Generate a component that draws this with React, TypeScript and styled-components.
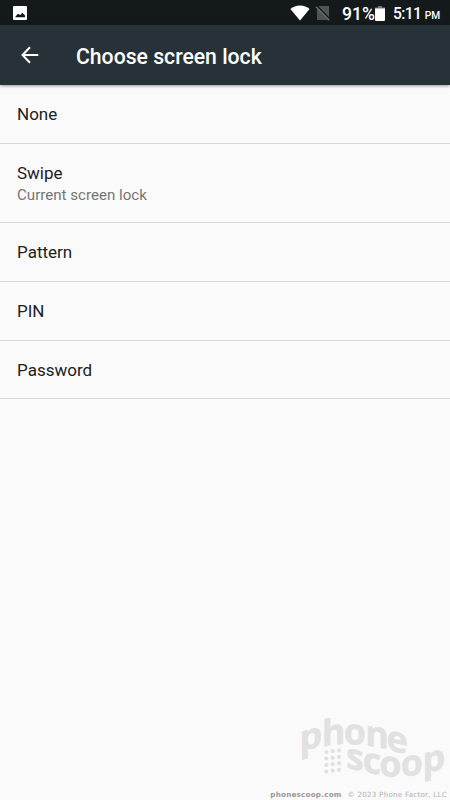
import React from "react";
import styled, { createGlobalStyle } from "styled-components";

const GlobalStyle = createGlobalStyle`
  * { box-sizing: border-box; }
  body { margin: 0; background: #fafafa; font-family: Roboto, sans-serif; }
`;

const Screen = styled.div`
  width: 450px;
  height: 800px;
  display: flex;
  flex-direction: column;
  overflow: hidden;
  background: #fafafa;
`;

const StatusBar = styled.div`
  height: 25px;
  flex: none;
  display: flex;
  align-items: center;
  justify-content: space-between;
  padding: 0 10px 0 13px;
  background: #14191c;
  color: #fff;
`;

const StatusGroup = styled.div`
  display: flex;
  align-items: center;
  height: 25px;
  svg { display: block; flex: none; }
`;

const BatteryLevel = styled.span`
  margin: 3px 0 0 11px;
  width: 33px;
  white-space: nowrap;
  font-size: 17.6px;
  font-weight: 500;
  line-height: 22px;
`;

const BatteryIcon = styled.svg`
  margin-top: 2px;
`;

const Clock = styled.span`
  margin: 5px 0 0 8px;
  width: 47px;
  white-space: nowrap;
  font-size: 15.6px;
  font-weight: 500;
  line-height: 22px;
  letter-spacing: -0.6px;
`;

const Meridiem = styled.span`
  margin-left: 3.5px;
  font-size: 10.2px;
  letter-spacing: 0;
`;

const Header = styled.header`
  height: 60px;
  flex: none;
  display: flex;
  align-items: center;
  padding-left: 20px;
  background: #273238;
  box-shadow: 0 1px 3px rgba(0, 0, 0, 0.4);
  z-index: 1;
`;

const Title = styled.h1`
  margin: 3px 0 0 36px;
  color: #fff;
  font-size: 21.2px;
  font-weight: 500;
  line-height: 28px;
`;

const OptionList = styled.div`
  flex: 1;
`;

const Option = styled.div<{ $height: number }>`
  height: ${(p) => p.$height}px;
  padding: 18px 0 0 17px;
  border-bottom: 1px solid #d9d9d9;
`;

const OptionName = styled.div`
  color: #212121;
  font-size: 17px;
  line-height: 22px;
`;

const OptionNote = styled.div`
  color: #757575;
  font-size: 15.1px;
  line-height: 21px;
  padding-top: 1px;
`;

const Brand = styled.svg`
  display: block;
  flex: none;
  align-self: flex-end;
  overflow: visible;
  font-family: "Open Sans", sans-serif;
  font-weight: 700;
  font-size: 36px;
  fill: #e1e1e1;
  text-anchor: middle;
`;

const Credit = styled.footer`
  height: 12px;
  flex: none;
  display: flex;
  justify-content: flex-end;
  padding: 1px 3px 0 0;
  gap: 6px;
  color: #b0b0b0;
  font: 7.2px/12px "DejaVu Sans", sans-serif;
  letter-spacing: 0.22px;
  white-space: nowrap;
`;

const Site = styled.span`
  color: #999;
  font-weight: 700;
`;

const options = [
  { name: "None", height: 59 },
  { name: "Swipe", note: "Current screen lock", height: 79 },
  { name: "Pattern", height: 59 },
  { name: "PIN", height: 59 },
  { name: "Password", height: 58 },
];

const letters: [string, number, number, number][] = [
  ["p", 21, 53, -14],
  ["h", 43.5, 49, -8],
  ["o", 64.8, 48.5, 2],
  ["n", 87, 51, 9],
  ["e", 107, 56, 13],
  ["s", 65, 73.5, 13],
  ["c", 82, 77.5, 9],
  ["o", 100.5, 80.5, 3],
  ["o", 121.8, 79.5, -5],
  ["p", 143.8, 75, -12],
];

export default function App() {
  return (
    <Screen>
      <GlobalStyle />
      <StatusBar>
        <StatusGroup>
          <svg width="14" height="14" viewBox="0 0 14 14">
            <path fill="#fff" fillRule="evenodd" d="M1 0h12a1 1 0 0 1 1 1v12a1 1 0 0 1-1 1H1a1 1 0 0 1-1-1V1a1 1 0 0 1 1-1ZM2 11.2h10V9.6L9.3 6.8 7.4 9 4.8 7.7Z" />
          </svg>
        </StatusGroup>
        <StatusGroup>
          <svg width="20" height="16" viewBox="0 0 20 16">
            <path fill="#fff" d="M.4 4C3 1.8 6.3.6 10 .6S17 1.8 19.6 4L10 15.5Z" />
          </svg>
          <svg width="21" height="16" viewBox="0 0 21 16">
            <path fill="#505457" d="M9 1h10v14H7V4Z" />
            <path stroke="#14191c" strokeWidth="2.4" d="M6 .5 20 14.8" />
            <path stroke="#6b6f71" strokeWidth="1.4" d="M6 1.7 19.3 15.2" />
          </svg>
          <BatteryLevel>91%</BatteryLevel>
          <BatteryIcon width="10" height="15" viewBox="0 0 10 15">
            <path fill="#777" d="M3 0h4v1.5h3V4H0V1.5h3Z" />
            <path fill="#fff" d="M0 2.5h10V14a1 1 0 0 1-1 1H1a1 1 0 0 1-1-1Z" />
          </BatteryIcon>
          <Clock>5:11<Meridiem>PM</Meridiem></Clock>
        </StatusGroup>
      </StatusBar>
      <Header>
        <svg width="20" height="20" viewBox="0 0 20 20" fill="none" stroke="#fff" strokeWidth="2">
          <path d="M18.3 10H3M10 2.3 2.5 10l7.5 7.7" />
        </svg>
        <Title>Choose screen lock</Title>
      </Header>
      <OptionList>
        {options.map((o) => (
          <Option key={o.name} $height={o.height}>
            <OptionName>{o.name}</OptionName>
            {o.note && <OptionNote>{o.note}</OptionNote>}
          </Option>
        ))}
      </OptionList>
      <Brand width="160" height="92" viewBox="0 0 160 92">
        {letters.map(([ch, x, y, tilt], i) => (
          <text key={i} stroke="#e1e1e1" strokeWidth="0.4" transform={`translate(${x} ${y}) skewY(${tilt})`}>{ch}</text>
        ))}
        {[0, 1, 2, 3].map((row) =>
          [0, 1, 2].map((col) => (
            <circle key={`${row}-${col}`} cx={36.3 + col * 6.4} cy={56 + row * 6.5 - col * 0.8} r="2.1" />
          )),
        )}
      </Brand>
      <Credit>
        <Site>phonescoop.com</Site>
        <span>© 2023 Phone Factor, LLC</span>
      </Credit>
    </Screen>
  );
}
